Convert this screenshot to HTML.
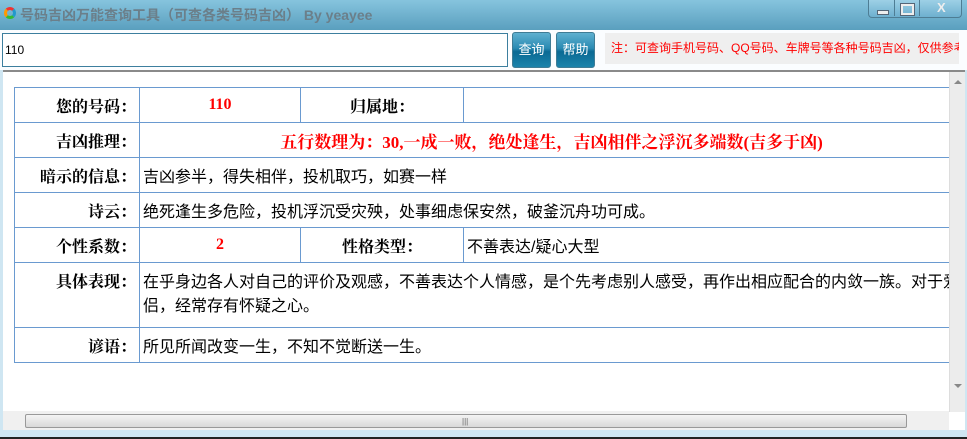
<!DOCTYPE html>
<html><head><meta charset="utf-8"><style>
body{margin:0;width:967px;height:439px;overflow:hidden;background:#cfe6f2;font-family:"Liberation Sans","Noto Sans CJK SC",sans-serif;position:relative}
.title{position:absolute;left:0;top:0;width:967px;height:30px;background:linear-gradient(#86c4de,#5a9fbe);}
.title .t{position:absolute;left:20px;top:5px;font-size:14px;font-weight:bold;color:#6b7f8a;white-space:nowrap}
.logo{position:absolute;left:4px;top:7px;width:12px;height:12px;border-radius:50%;border:3px solid;border-color:#e33 #29c #3b3 #f90;box-sizing:border-box}
.wb{position:absolute;top:0;left:868px;width:92px;height:17px;border:1px solid #4e7d94;border-top:none;border-radius:0 0 4px 4px;background:linear-gradient(#9dd0e6,#6eb0cf)}
.wb span{position:absolute;top:0;height:16px;border-left:1px solid #4e7d94}
.bar{position:absolute;left:0;top:30px;width:967px;height:40px;background:#fbfdff}
.inp{position:absolute;left:2px;top:33px;width:502px;height:32px;border:1px solid #3d7f9e;background:#fff;font-size:12px;line-height:32px;padding-left:2px;box-sizing:content-box}
.btn{position:absolute;top:32px;width:37px;height:34px;border:1px solid #3f7c95;border-radius:3px;background:linear-gradient(#5fb0d0 0%,#2a8ab2 45%,#0b6a94 55%,#1b83ab 100%);color:#fff;font-size:13px;text-align:center;line-height:34px}
.note{position:absolute;left:605px;top:33px;width:354px;height:31px;background:#efefef;color:#f00;font-size:12px;line-height:31px;padding-left:6px;white-space:nowrap;overflow:hidden;box-sizing:border-box}
.view{position:absolute;left:3px;top:70px;width:962px;height:358px;background:#fff;border-top:2px solid #8a8a8a;overflow:hidden}
table{position:absolute;left:11px;top:15px;border-collapse:collapse;width:1000px;table-layout:fixed}
td{border:1px solid #6a9ad0;height:34px;padding:0 3px;font-size:16px;white-space:nowrap;overflow:hidden;box-sizing:border-box}
td.l{text-align:right;font-weight:bold;font-family:"Liberation Serif","Noto Serif CJK SC",serif;font-size:16px}
.r{color:#f00;font-weight:bold;text-align:center;font-family:"Liberation Serif","Noto Serif CJK SC",serif;font-size:16px}
.vs{position:absolute;left:946px;top:0;width:16px;height:340px;background:#ececec;border-left:1px solid #ddd}
.hs{position:absolute;left:0;top:339px;width:946px;height:19px;background:#f0f0f0}
.thumb{position:absolute;left:22px;top:3px;width:880px;height:12px;border:1px solid #999;border-radius:2px;background:linear-gradient(#f4f4f4,#d8d8d8)}
</style></head><body>
<div class="title"><div class="logo"></div><div class="t">号码吉凶万能查询工具（可查各类号码吉凶） By yeayee</div>
<div class="wb"><span style="left:25px"></span><span style="left:50px"></span>
<div style="position:absolute;left:8px;top:10px;width:10px;height:3px;background:#eee;border:1px solid #567"></div>
<div style="position:absolute;left:32px;top:4px;width:9px;height:7px;border:2px solid #eee;outline:1px solid #567"></div>
<div style="position:absolute;left:68px;top:0;color:#eee;font-weight:bold;font-size:13px">X</div></div></div>
<div class="bar"></div>
<div class="inp">110</div>
<div class="btn" style="left:512px">查询</div>
<div class="btn" style="left:556px">帮助</div>
<div class="note">注：可查询手机号码、QQ号码、车牌号等各种号码吉凶，仅供参考</div>
<div class="view">
<table>
<colgroup><col style="width:125px"><col style="width:161px"><col style="width:163px"><col style="width:551px"></colgroup>
<tr style="height:35px"><td class="l">您的号码：</td><td class="r">110</td><td class="l" style="text-align:center">归属地：</td><td></td></tr>
<tr style="height:35px"><td class="l">吉凶推理：</td><td colspan="3" class="r" style="padding-right:54px;font-size:17px">五行数理为：30,一成一败，绝处逢生，吉凶相伴之浮沉多端数(吉多于凶)</td></tr>
<tr style="height:35px"><td class="l">暗示的信息：</td><td colspan="3">吉凶参半，得失相伴，投机取巧，如赛一样</td></tr>
<tr style="height:35px"><td class="l">诗云：</td><td colspan="3">绝死逢生多危险，投机浮沉受灾殃，处事细虑保安然，破釜沉舟功可成。</td></tr>
<tr style="height:35px"><td class="l">个性系数：</td><td class="r">2</td><td class="l" style="text-align:center">性格类型：</td><td>不善表达/疑心大型</td></tr>
<tr style="height:65px"><td class="l" style="height:65px;vertical-align:top;padding-top:6px">具体表现：</td><td colspan="3" style="height:65px;line-height:24px;padding-top:0">在乎身边各人对自己的评价及观感，不善表达个人情感，是个先考虑别人感受，再作出相应配合的内敛一族。对于爱<br>侣，经常存有怀疑之心。</td></tr>
<tr style="height:35px"><td class="l">谚语：</td><td colspan="3">所见所闻改变一生，不知不觉断送一生。</td></tr>
</table>
<div class="vs"><div style="position:absolute;left:4px;top:8px;border:4px solid transparent;border-bottom:4px solid #888;border-top:none"></div><div style="position:absolute;left:4px;top:312px;border:4px solid transparent;border-top:4px solid #888;border-bottom:none"></div></div>
<div class="hs"><div class="thumb"><div style="position:absolute;left:436px;top:2px;font-size:8px;color:#666">|||</div></div></div>
</div>
<div style="position:absolute;left:0;top:437px;width:967px;height:2px;background:#222"></div>
</body></html>
